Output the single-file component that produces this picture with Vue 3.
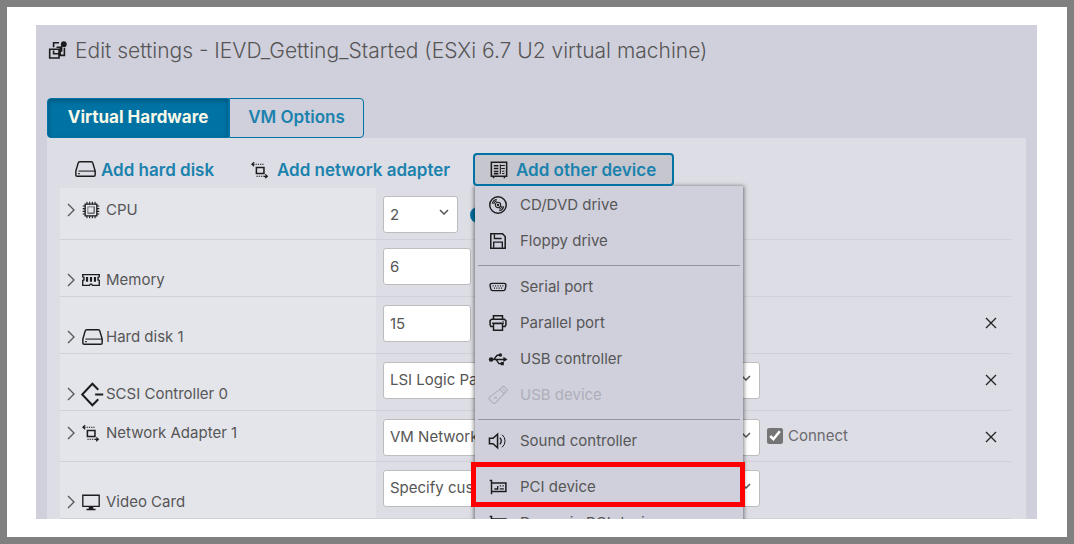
<script setup>
import { ref } from 'vue'

const icons = {
  vm: '<path d="M1.700 8.200h9.300v8.800H1.700z"/><path d="M11 1.700H5.600v4.500M5.600 9.500v3.300h6.600V6.200H8.500M16.400 6.800v7.600H11M11 10h2.600V5"/><circle cx="15.800" cy="3.200" r="2.900" fill="currentColor" stroke="none"/>',
  disk: '<path d="M4.600 2.700h10.800a1.600 1.600 0 0 1 1.600 1.200l2.200 7.600v3.800a1.200 1.200 0 0 1-1.200 1.200H2a1.200 1.200 0 0 1-1.200-1.200v-3.800L3 3.900a1.600 1.600 0 0 1 1.600-1.200z" stroke-width="1.400"/><path d="M3.300 11.500h16" stroke-width="1"/><path d="M3 14h1.600"/>',
  network: '<path d="M6 7.200h8.400v6.600H6z" stroke-width="1.700"/><path d="M1 3.600h3M3.500 1.400L1 3.600l2.500 2.200" stroke-width="1.300"/><path d="M5 3.600h9M6 17h8" stroke-dasharray="1.500 1"/><path d="M14 17h4M15.800 14.800l2.400 2.200-2.400 2.200" stroke-width="1.300"/>',
  board: '<path d="M1.500 1.500h17v15.500h-17zM4 17v2.300M16 17v2.300" stroke-width="1.700"/><path d="M4.300 5.200h5M4.300 8.400h5M4.300 11.600h5M4.300 14.200h5" stroke-width="1.600"/><path d="M11.500 4v10.500M12 5h4.500M12.500 8.400h4M13.500 11.400H16M13.500 13.800H16" stroke-width="1.200"/>',
  cpu: '<path d="M3.500 3.500h13v13h-13z" stroke-width="1.500"/><path d="M13.500 6v7.500H6" stroke-width="1"/><path d="M6.500 13V6.500H13" stroke-width=".6"/><path d="M5.500.8v2.700M8.500.8v2.700M11.500.8v2.700M14.500.8v2.700M5.500 16.500v2.700M8.500 16.500v2.700M11.500 16.500v2.700M14.500 16.500v2.700M.8 5.500h2.700M.8 8.500h2.700M.8 11.500h2.700M.8 14.500h2.700M16.500 5.500h2.700M16.500 8.500h2.700M16.500 11.500h2.700M16.500 14.500h2.700" stroke-width="1.200"/>',
  memory: '<path d="M.8 7V4h18.400v3M.8 10v6h7.500l1-1.400h1.400l1 1.400h7.500v-6M.8 7h1.400v3H.8M19.200 7h-1.400v3h1.400" stroke-width="1.500"/><path d="M5.600 6.800v5.200M10 6.800v5.200M14.400 6.800v5.200" stroke-width="2.400"/>',
  scsi: '<path d="M15.500 5.500L9.900-.2.200 10l9.700 10.200 5.600-5.700M12.500 10h7.700" stroke-width="1.900"/>',
  video: '<path d="M.9 2.500h18.200v12.400H.9z" stroke-width="1.500"/><path d="M7.500 15.500h5v2h2.500v1.700H5v-1.700h2.500z" fill="currentColor" stroke="none"/>',
  cd: '<circle cx="10" cy="10" r="9.200" stroke-width="1.600"/><circle cx="10" cy="10" r="3"/><circle cx="10" cy="10" r=".7" fill="currentColor"/><path d="M3.500 8.500A7 7 0 0 1 8.500 3.500M5.200 9A5 5 0 0 1 8.700 5.200M16.500 11.500a7 7 0 0 1-5 5M14.800 11a5 5 0 0 1-3.500 3.800"/>',
  floppy: '<path d="M2 2h13l3 3v13H2z" stroke-width="1.700"/><path d="M6 2.500v4.700h8M5.200 17.500v-6.300h9.600v6.300" stroke-width="1.500"/>',
  serial: '<path d="M3.200 6h13.600a2 2 0 0 1 2 2.400l-.8 4a2 2 0 0 1-2 1.600H4a2 2 0 0 1-2-1.600l-.8-4A2 2 0 0 1 3.200 6z" stroke-width="1.600"/><path d="M4 8.800h1.200M6.700 8.800h1.200M9.400 8.800h1.200M12.100 8.800h1.200M14.800 8.800H16M5.500 11.300h1.200M8.100 11.300h1.200M10.700 11.300h1.200M13.300 11.300h1.200" stroke-width="1.300"/>',
  printer: '<path d="M5 5.500V2h10v3.500M4.500 14H2.200L1.200 12V7.300L3 5.800h14l1.800 1.500V12l-1 2h-2.300" stroke-width="1.700"/><path d="M5 10.500h10V18H5zM3.500 10.300h13" stroke-width="1.600"/><path d="M15 8h1.500"/>',
  usb: '<path d="M2 10.500h15M5.500 10.300L9 5.800h3M8 10.700l3 4.500h3" stroke-width="1.500"/><circle cx="2.300" cy="10.500" r="2.500" fill="currentColor" stroke="none"/><circle cx="12.600" cy="5.600" r="2" fill="currentColor" stroke="none"/><path d="M13 13.400h3.500v3.500H13zM16 7.600l4.500 2.900-4.500 2.900z" fill="currentColor" stroke="none"/>',
  stick: '<path d="M12 3.800l4.800 4.800-9.600 10.200a2 2 0 0 1-2.900 0l-3.600-3.600a2 2 0 0 1 0-2.900zM12.600 3.600L16-.1l4.600 4.500-3.400 3.700"/><path d="M15.600 3l1.200 1.200M17.600 4.900l-.9.900M5.500 13.500l3-1.300M6.500 12l2 2"/>',
  sound: '<path d="M.5 7h4l5-4.500v15L4.500 13h-4z" stroke-width="1.700"/><path d="M12 6.300a5 5 0 0 1 0 7.400" stroke-width="1.500"/><path d="M14.500 3a9 9 0 0 1 0 14" stroke-width="1.100"/>',
  pci: '<path d="M.8 2.700h2V18" stroke-width="1.600"/><path d="M2.800 5.500h16v9.500h-16" stroke-width="1.700"/><path d="M6 12.200h3.700V9M12 8.700h1.500M15 8.700h1.500M12 12h4.500" stroke-width="1.500"/>',
}

const rows = [
  { id: 'cpu', label: 'CPU', icon: 'cpu', height: 'short', kind: 'select', size: 'narrow', value: '2', info: true },
  { id: 'memory', label: 'Memory', icon: 'memory', height: 'tall', kind: 'text', value: '6' },
  { id: 'disk', label: 'Hard disk 1', icon: 'disk', height: 'tall', kind: 'text', value: '15', removable: true },
  { id: 'scsi', label: 'SCSI Controller 0', icon: 'scsi', height: 'tall', kind: 'select', size: 'wide', value: 'LSI Logic Parallel', removable: true },
  { id: 'network', label: 'Network Adapter 1', icon: 'network', height: 'short', kind: 'select', size: 'wide', value: 'VM Network', removable: true, connect: true },
  { id: 'video', label: 'Video Card', icon: 'video', height: 'tall', kind: 'select', size: 'wide', value: 'Specify custom settings' },
]

const menu = [
  [
    { label: 'CD/DVD drive', icon: 'cd' },
    { label: 'Floppy drive', icon: 'floppy' },
  ],
  [
    { label: 'Serial port', icon: 'serial' },
    { label: 'Parallel port', icon: 'printer' },
    { label: 'USB controller', icon: 'usb' },
    { label: 'USB device', icon: 'stick', disabled: true },
  ],
  [{ label: 'Sound controller', icon: 'sound' }],
  [
    { label: 'PCI device', icon: 'pci', marked: true },
    { label: 'Dynamic PCI device', icon: 'pci' },
  ],
]

const connected = ref(true)
</script>

<template>
  <div class="frame">
    <main class="dialog">
      <h1 class="title">
        <svg class="icon" viewBox="0 0 20 20" v-html="icons.vm"></svg>
        Edit settings - IEVD_Getting_Started (ESXi 6.7 U2 virtual machine)
      </h1>

      <nav class="tabs">
        <button type="button" class="tab active">Virtual Hardware</button>
        <button type="button" class="tab">VM Options</button>
      </nav>

      <section class="panel">
        <div class="toolbar">
          <button type="button" class="tool disk">
            <svg class="icon large" viewBox="0 0 20 20" v-html="icons.disk"></svg>Add hard disk
          </button>
          <button type="button" class="tool net">
            <svg class="icon" viewBox="0 0 20 20" v-html="icons.network"></svg>Add network adapter
          </button>
          <div class="dropdown">
            <button type="button" class="tool open" aria-expanded="true">
              <svg class="icon" viewBox="0 0 20 20" v-html="icons.board"></svg>Add other device
            </button>
            <div class="menu">
              <div v-for="(group, g) in menu" :key="g" class="group">
                <button
                  v-for="item in group"
                  :key="item.label"
                  type="button"
                  class="item"
                  :class="{ marked: item.marked }"
                  :disabled="item.disabled"
                >
                  <svg class="icon" viewBox="0 0 20 20" v-html="icons[item.icon]"></svg>{{ item.label }}
                </button>
              </div>
            </div>
          </div>
        </div>

        <table class="hardware">
          <tbody>
            <tr v-for="row in rows" :key="row.id" :class="row.height">
              <th scope="row">
                <label class="name" :for="row.id">
                  <svg class="caret" viewBox="0 0 8 14"><path d="M1 1l6 6-6 6" /></svg>
                  <svg class="icon" :class="{ large: row.icon === 'disk' || row.icon === 'scsi' }" viewBox="0 0 20 20" v-html="icons[row.icon]"></svg>
                  <span>{{ row.label }}</span>
                </label>
              </th>
              <td>
                <div class="value">
                  <input v-if="row.kind === 'text'" :id="row.id" class="field" type="text" :value="row.value" />
                  <div v-else class="select" :class="row.size">
                    <select :id="row.id" class="field">
                      <option>{{ row.value }}</option>
                    </select>
                    <svg class="chevron" viewBox="0 0 10 6"><path d="M1 1l4 4 4-4" /></svg>
                  </div>
                  <span v-if="row.info" class="info"></span>
                  <label v-if="row.connect" class="connect">
                    <input v-model="connected" type="checkbox" />
                    Connect
                  </label>
                </div>
              </td>
              <td class="actions">
                <button v-if="row.removable" type="button" class="remove" :aria-label="'Remove ' + row.label">
                  <svg viewBox="0 0 12 12"><path d="M1 1l10 10M11 1L1 11" /></svg>
                </button>
              </td>
            </tr>
          </tbody>
        </table>
      </section>
    </main>
  </div>
</template>

<style>
body {
  margin: 0;
}
</style>

<style scoped>
* {
  box-sizing: border-box;
}

.frame {
  height: 100vh;
  padding: 18px 30px 18px 29px;
  border: 7px solid #808080;
  background: #fff;
  font-family: Inter, "Open Sans", sans-serif;
  font-size: 15px;
  line-height: 20px;
  color: #565656;
}

button,
input,
select {
  font: inherit;
  color: inherit;
}

button {
  margin: 0;
  padding: 0;
  border: 0;
  background: none;
}

.icon {
  flex: none;
  width: 18px;
  height: 18px;
  fill: none;
  stroke: currentColor;
  stroke-width: 1.2;
  color: #1c1c1e;
  overflow: visible;
}

.icon.large {
  width: 21px;
  height: 21px;
}

.dialog {
  height: 100%;
  padding: 11px 11px 0;
  overflow: hidden;
  background: #d0d0dc;
}

.title {
  display: flex;
  align-items: center;
  gap: 7px;
  margin: 0 0 32px;
  padding-left: 1px;
  font-size: 21px;
  font-weight: 300;
  line-height: 30px;
}

.title .icon {
  width: 20px;
  height: 20px;
  stroke-width: 1.6;
}

.tabs {
  display: flex;
}

.tab {
  width: 135px;
  height: 40px;
  padding-bottom: 3px;
  border: 1px solid #0072a3;
  border-radius: 0 4px 4px 0;
  font-size: 17px;
  font-weight: 600;
  color: #1b82ae;
}

.tab.active {
  width: 182px;
  border-radius: 4px 0 0 4px;
  background: #0072a3;
  box-shadow: inset 0 2px 4px #00567c;
  color: #f6f8e8;
  font-weight: 700;
}

.panel {
  padding: 15px 15px 0 13px;
  background: #dddde5;
}

.toolbar {
  display: flex;
  align-items: flex-start;
  height: 35px;
  padding-left: 15px;
}

.tool {
  display: flex;
  align-items: center;
  gap: 8px;
  height: 33px;
  font-size: 17px;
  font-weight: 600;
  color: #1b82ae;
}

.tool.disk {
  gap: 5px;
  width: 176px;
}

.tool.net {
  width: 222px;
}

.dropdown {
  position: relative;
  z-index: 1;
}

.tool.open {
  position: relative;
  z-index: 1;
  width: 201px;
  padding-left: 15px;
  border: 2px solid #0072a3;
  border-radius: 4px;
  background: #c6c6ce;
}

.menu {
  position: absolute;
  top: 100%;
  left: 2px;
  width: 268px;
  padding-top: 1px;
  background: #d0d0dc;
  box-shadow: 0 1px 4px 1px rgba(0, 0, 0, 0.5);
}

.group + .group::before {
  content: "";
  display: block;
  height: 1px;
  margin: 6px 3px 3px;
  background: #9494a0;
}

.item {
  position: relative;
  display: flex;
  align-items: center;
  gap: 13px;
  width: 100%;
  height: 36px;
  padding-left: 14px;
}

.item:disabled,
.item:disabled .icon {
  color: #aeaeb9;
}

.item.marked::after {
  content: "";
  position: absolute;
  inset: -7px -2px -2px -4px;
  border: 5px solid #f00;
}

.hardware {
  width: 100%;
  border-collapse: collapse;
}

tr {
  border-bottom: 1px solid #d0d0d8;
}

.short {
  height: 51px;
}

.tall {
  height: 57px;
}

th {
  width: 316px;
  padding: 12px 0 0 7px;
  vertical-align: top;
  background: #e4e5ea;
  font-weight: 400;
  text-align: left;
}

.tall th {
  padding-top: 30px;
}

td {
  padding: 8px 0 0 7px;
  vertical-align: top;
}

.name {
  display: grid;
  grid-template-columns: 8px 21px auto;
  align-items: center;
  justify-content: start;
  column-gap: 7px;
  height: 20px;
}

.name span {
  margin-left: -4px;
}

.caret,
.chevron,
.remove svg {
  fill: none;
  stroke: #555;
  stroke-width: 1.3;
}

.caret {
  width: 8px;
  height: 14px;
}

.value {
  display: flex;
  align-items: center;
  gap: 7px;
}

.field {
  width: 88px;
  height: 37px;
  padding: 0 6px;
  border: 1px solid #bdbdbd;
  border-radius: 3px;
  background: #fff;
  appearance: none;
}

.select {
  position: relative;
  width: 75px;
}

.select.wide {
  width: 377px;
}

.select .field {
  display: block;
  width: 100%;
}

.chevron {
  position: absolute;
  top: 13px;
  right: 9px;
  width: 10px;
  height: 6px;
  stroke-width: 1.5;
}

.info {
  width: 16px;
  height: 16px;
  margin-left: 5px;
  border-radius: 50%;
  background: #0072a3;
}

.connect {
  display: flex;
  align-items: center;
  gap: 5px;
  padding-bottom: 3px;
  color: #6a6a6e;
}

.connect input {
  width: 16px;
  height: 16px;
  margin: 0;
  accent-color: #757575;
}

.actions {
  width: 40px;
  padding: 17px 14px 0 0;
  text-align: right;
}

.remove {
  width: 12px;
  height: 12px;
}

.remove svg {
  display: block;
  width: 12px;
  height: 12px;
  stroke: #222;
}
</style>
